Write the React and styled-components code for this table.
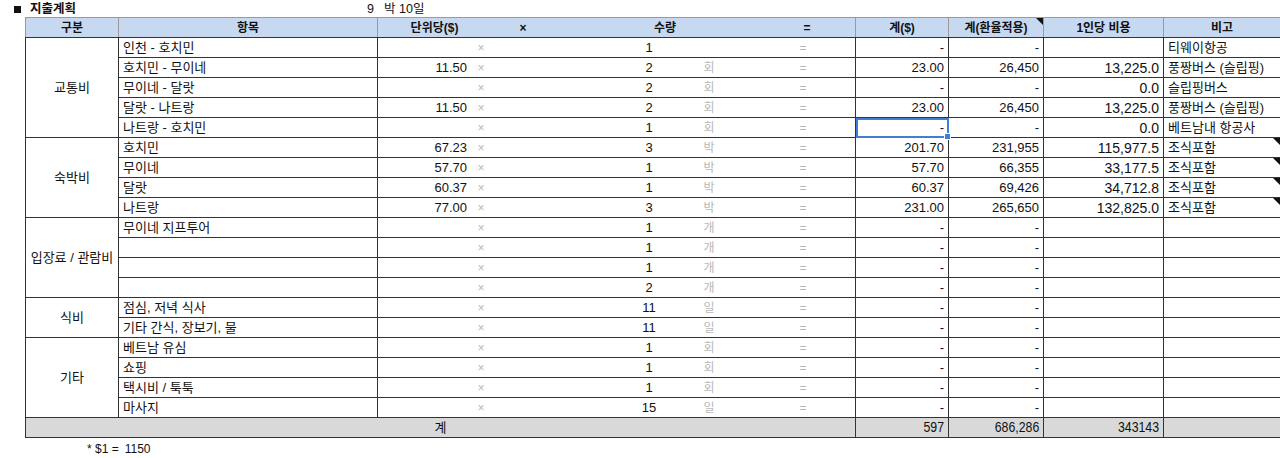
import styled, { createGlobalStyle, css } from 'styled-components'

const GlobalStyle = createGlobalStyle`
    body {
        margin: 0;
        background: #ffffff;
        font-family: "Liberation Sans", "Noto Sans CJK KR", sans-serif;
        color: #111111;
        overflow: hidden;
    }
`

const groups = [
    {
        name: '교통비',
        rows: [
            { item: '인천 - 호치민', price: '', qty: '1', unit: '', usd: '-', krw: '-', per: '', note: '티웨이항공' },
            { item: '호치민 - 무이네', price: '11.50', qty: '2', unit: '회', usd: '23.00', krw: '26,450', per: '13,225.0', note: '풍짱버스 (슬립핑)' },
            { item: '무이네 - 달랏', price: '', qty: '2', unit: '회', usd: '-', krw: '-', per: '0.0', note: '슬립핑버스' },
            { item: '달랏 - 나트랑', price: '11.50', qty: '2', unit: '회', usd: '23.00', krw: '26,450', per: '13,225.0', note: '풍짱버스 (슬립핑)' },
            { item: '나트랑 - 호치민', price: '', qty: '1', unit: '회', usd: '-', krw: '-', per: '0.0', note: '베트남내 항공사', selected: true },
        ],
    },
    {
        name: '숙박비',
        rows: [
            { item: '호치민', price: '67.23', qty: '3', unit: '박', usd: '201.70', krw: '231,955', per: '115,977.5', note: '조식포함', flag: true },
            { item: '무이네', price: '57.70', qty: '1', unit: '박', usd: '57.70', krw: '66,355', per: '33,177.5', note: '조식포함', flag: true },
            { item: '달랏', price: '60.37', qty: '1', unit: '박', usd: '60.37', krw: '69,426', per: '34,712.8', note: '조식포함', flag: true },
            { item: '나트랑', price: '77.00', qty: '3', unit: '박', usd: '231.00', krw: '265,650', per: '132,825.0', note: '조식포함', flag: true },
        ],
    },
    {
        name: '입장료 / 관람비',
        rows: [
            { item: '무이네 지프투어', price: '', qty: '1', unit: '개', usd: '-', krw: '-', per: '', note: '' },
            { item: '', price: '', qty: '1', unit: '개', usd: '-', krw: '-', per: '', note: '' },
            { item: '', price: '', qty: '1', unit: '개', usd: '-', krw: '-', per: '', note: '' },
            { item: '', price: '', qty: '2', unit: '개', usd: '-', krw: '-', per: '', note: '' },
        ],
    },
    {
        name: '식비',
        rows: [
            { item: '점심, 저녁 식사', price: '', qty: '11', unit: '일', usd: '-', krw: '-', per: '', note: '' },
            { item: '기타 간식, 장보기, 물', price: '', qty: '11', unit: '일', usd: '-', krw: '-', per: '', note: '' },
        ],
    },
    {
        name: '기타',
        rows: [
            { item: '베트남 유심', price: '', qty: '1', unit: '회', usd: '-', krw: '-', per: '', note: '' },
            { item: '쇼핑', price: '', qty: '1', unit: '회', usd: '-', krw: '-', per: '', note: '' },
            { item: '택시비 / 툭툭', price: '', qty: '1', unit: '회', usd: '-', krw: '-', per: '', note: '' },
            { item: '마사지', price: '', qty: '15', unit: '일', usd: '-', krw: '-', per: '', note: '' },
        ],
    },
]

const App = () => {
    return (
        <Page>
            <GlobalStyle />
            <TitleBar>
                <Bullet />
                <Title>지출계획</Title>
                <Nights>9</Nights>
                <Days>박 10일</Days>
            </TitleBar>
            <Sheet>
                <colgroup>
                    <col style={{ width: 93 }} />
                    <col style={{ width: 259 }} />
                    <col style={{ width: 478 }} />
                    <col style={{ width: 93 }} />
                    <col style={{ width: 95 }} />
                    <col style={{ width: 120 }} />
                    <col style={{ width: 117 }} />
                </colgroup>
                <thead>
                    <tr>
                        <Head>구분</Head>
                        <Head>항목</Head>
                        <Head>
                            <HeadMid>
                                <span>단위당($)</span>
                                <span>×</span>
                                <span>수량</span>
                                <span>=</span>
                                <span />
                            </HeadMid>
                        </Head>
                        <Head>계($)</Head>
                        <Head $flag>계(환율적용)</Head>
                        <Head>1인당 비용</Head>
                        <Head>비고</Head>
                    </tr>
                </thead>
                <tbody>
                    {groups.map((g) =>
                        g.rows.map((r, i) => (
                            <tr key={g.name + i}>
                                {i === 0 && <Group rowSpan={g.rows.length}>{g.name}</Group>}
                                <Cell>{r.item}</Cell>
                                <Cell>
                                    <Mid>
                                        <Price>{r.price}</Price>
                                        <Faint>×</Faint>
                                        <span />
                                        <Qty>{r.qty}</Qty>
                                        <Faint>{r.unit}</Faint>
                                        <span />
                                        <Faint>=</Faint>
                                        <span />
                                    </Mid>
                                </Cell>
                                <Num $selected={r.selected}>{r.usd}</Num>
                                <Num>{r.krw}</Num>
                                <Num $big>{r.per}</Num>
                                <Cell $flag={r.flag}>{r.note}</Cell>
                            </tr>
                        ))
                    )}
                    <TotalRow>
                        <TotalLabel colSpan={3}>계</TotalLabel>
                        <TotalNum><Narrow>597</Narrow></TotalNum>
                        <TotalNum><Narrow>686,286</Narrow></TotalNum>
                        <TotalNum><Narrow>343143</Narrow></TotalNum>
                        <TotalNum />
                    </TotalRow>
                </tbody>
            </Sheet>
            <Note>
                <span>* $1 =</span>
                <span>1150</span>
            </Note>
        </Page>
    )
}

const Page = styled.div`
    width: 1280px;
    height: 458px;
    overflow: hidden;
`

const TitleBar = styled.div`
    display: flex;
    align-items: center;
    height: 17px;
    padding-left: 14px;
    font-size: 12.5px;
    line-height: 14px;
`

const Bullet = styled.span`
    width: 7px;
    height: 7px;
    background: #111111;
    margin-right: 9px;
    margin-top: 1px;
`

const Title = styled.span`
    font-weight: bold;
    width: 337px;
`

const Nights = styled.span`
    width: 17px;
`

const Days = styled.span``

const Sheet = styled.table`
    margin-left: 25px;
    border-collapse: collapse;
    table-layout: fixed;
    width: 1255px;
    font-size: 13px;

    td, th {
        padding: 0;
        height: 19px;
        line-height: 18px;
        white-space: nowrap;
        overflow: visible;
    }
`

const flagMark = css`
    position: relative;
    &::after {
        content: '';
        position: absolute;
        top: 0;
        right: 0;
        border-top: 7px solid #111111;
        border-left: 7px solid transparent;
    }
`

const Head = styled.th`
    background: #c6d9f1;
    border: 1px solid #9a9a9a;
    border-bottom: 1px solid #333333;
    font-size: 12px;
    font-weight: bold;
    text-align: center;
    ${(p) => p.$flag && flagMark}
`

const HeadMid = styled.div`
    display: grid;
    grid-template-columns: 113px 64px 220px 64px 1fr;
    text-align: center;
`

const Cell = styled.td`
    border: 1px solid #333333;
    padding-left: 4px !important;
    text-align: left;
    ${(p) => p.$flag && flagMark}
`

const Group = styled.td`
    border: 1px solid #333333;
    text-align: center;
    vertical-align: middle;
`

const Mid = styled.div`
    display: grid;
    grid-template-columns: 93px 20px 106px 104px 16px 76px 20px 39px;
    margin-left: -4px;
`

const Price = styled.span`
    text-align: right;
    padding-right: 4px;
`

const Faint = styled.span`
    color: #b8b8b8;
    text-align: center;
    font-size: 12px;
`

const Qty = styled.span`
    text-align: center;
`

const Num = styled.td`
    border: 1px solid #333333;
    text-align: right;
    padding-right: 4px !important;
    font-size: ${(p) => (p.$big ? '14px' : '13px')};
    ${(p) =>
        p.$selected &&
        css`
            position: relative;
            outline: 2px solid #3f7fd6;
            outline-offset: -2px;
            &::after {
                content: '';
                position: absolute;
                right: -3px;
                bottom: -3px;
                width: 5px;
                height: 5px;
                background: #3f7fd6;
                border: 1px solid #ffffff;
            }
        `}
`

const TotalRow = styled.tr`
    background: #d9d9d9;
`

const TotalLabel = styled.td`
    border: 1px solid #333333;
    text-align: center;
`

const TotalNum = styled.td`
    border: 1px solid #333333;
    text-align: right;
    padding-right: 4px !important;
`

const Narrow = styled.span`
    display: inline-block;
    font-size: 15px;
    transform: scaleX(0.82);
    transform-origin: right center;
`

const Note = styled.div`
    display: flex;
    gap: 6px;
    padding-left: 87px;
    margin-top: 4px;
    font-size: 12px;
`

export default App
